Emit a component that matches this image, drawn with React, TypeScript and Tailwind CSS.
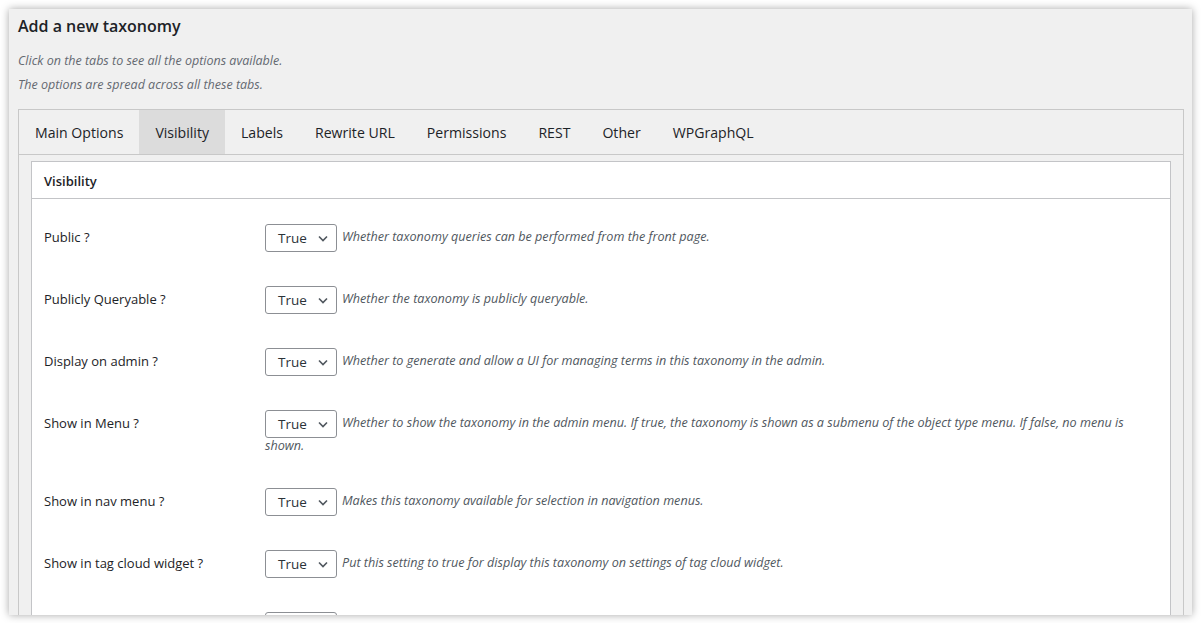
import React from "react";

const tabs = ["Main Options", "Visibility", "Labels", "Rewrite URL", "Permissions", "REST", "Other", "WPGraphQL"];

const rows = [
  { label: "Public ?", desc: "Whether taxonomy queries can be performed from the front page." },
  { label: "Publicly Queryable ?", desc: "Whether the taxonomy is publicly queryable." },
  { label: "Display on admin ?", desc: "Whether to generate and allow a UI for managing terms in this taxonomy in the admin." },
  {
    label: "Show in Menu ?",
    desc: "Whether to show the taxonomy in the admin menu. If true, the taxonomy is shown as a submenu of the object type menu. If false, no menu is shown.",
  },
  { label: "Show in nav menu ?", desc: "Makes this taxonomy available for selection in navigation menus." },
  { label: "Show in tag cloud widget ?", desc: "Put this setting to true for display this taxonomy on settings of tag cloud widget." },
  { label: "Show in quick edit ?", desc: "Whether to show the taxonomy in the quick/bulk edit panel." },
];

function FakeSelect() {
  return (
    <span className="inline-flex h-[28px] w-[72px] items-center justify-between rounded-[3px] border border-[#8c8f94] bg-white pl-[12px] pr-[7px] align-middle text-[13.5px] leading-[20px] text-[#2c3338]">
      <span>True</span>
      <svg width="12" height="12" viewBox="0 0 12 12" fill="none">
        <path d="M2 4.5 6 8.5 10 4.5" stroke="#50575e" strokeWidth="1.6" />
      </svg>
    </span>
  );
}

export default function App() {
  return (
    <div className="h-[623px] overflow-hidden bg-white p-[9px] text-[#1d2327]" style={{ fontFamily: '"Open Sans", "Noto Sans", sans-serif' }}>
      <div className="h-[606px] overflow-hidden bg-[#f0f0f0] px-[9px] pt-[5px] shadow-[0_0_8px_rgba(0,0,0,0.35)]">
        <h1 className="h-[24px] text-[16px] font-semibold leading-[24px]">Add a new taxonomy</h1>
        <p className="mt-[11px] h-[24px] text-[12.5px] italic leading-[24px] text-[#646970]">Click on the tabs to see all the options available.</p>
        <p className="h-[24px] text-[12.5px] italic leading-[24px] text-[#646970]">The options are spread across all these tabs.</p>

        <div className="mt-[12px] mr-[-1px] border border-[#c8c8c8]">
          {/* tab bar */}
          <div className="flex h-[45px] border-b border-[#c8c8c8]">
            {tabs.map((t) => (
              <div
                key={t}
                className={`flex items-center px-[16px] pt-[2px] text-[14.1px] ${t === "Visibility" ? "bg-[#dcdcdc]" : ""}`}
              >
                {t}
              </div>
            ))}
          </div>

          <div className="px-[12px] pt-[6px]">
            <div className="border border-[#c3c4c7] bg-white">
              <div className="flex h-[37px] items-center border-b border-[#c3c4c7] px-[12px] pt-[3px] text-[13px] font-semibold">
                Visibility
              </div>
              <div className="pt-[8px]">
                {rows.map((r) => (
                  <div key={r.label} className="flex items-start px-[12px] py-[17px]">
                    <div className="flex h-[28px] w-[221px] shrink-0 items-center text-[13px]">{r.label}</div>
                    <div className="max-w-[895px] text-[12.6px] leading-[16px]">
                      <FakeSelect />
                      <span className="ml-[5px] italic text-[#50575e]">{r.desc}</span>
                    </div>
                  </div>
                ))}
              </div>
            </div>
          </div>
        </div>
      </div>
    </div>
  );
}
